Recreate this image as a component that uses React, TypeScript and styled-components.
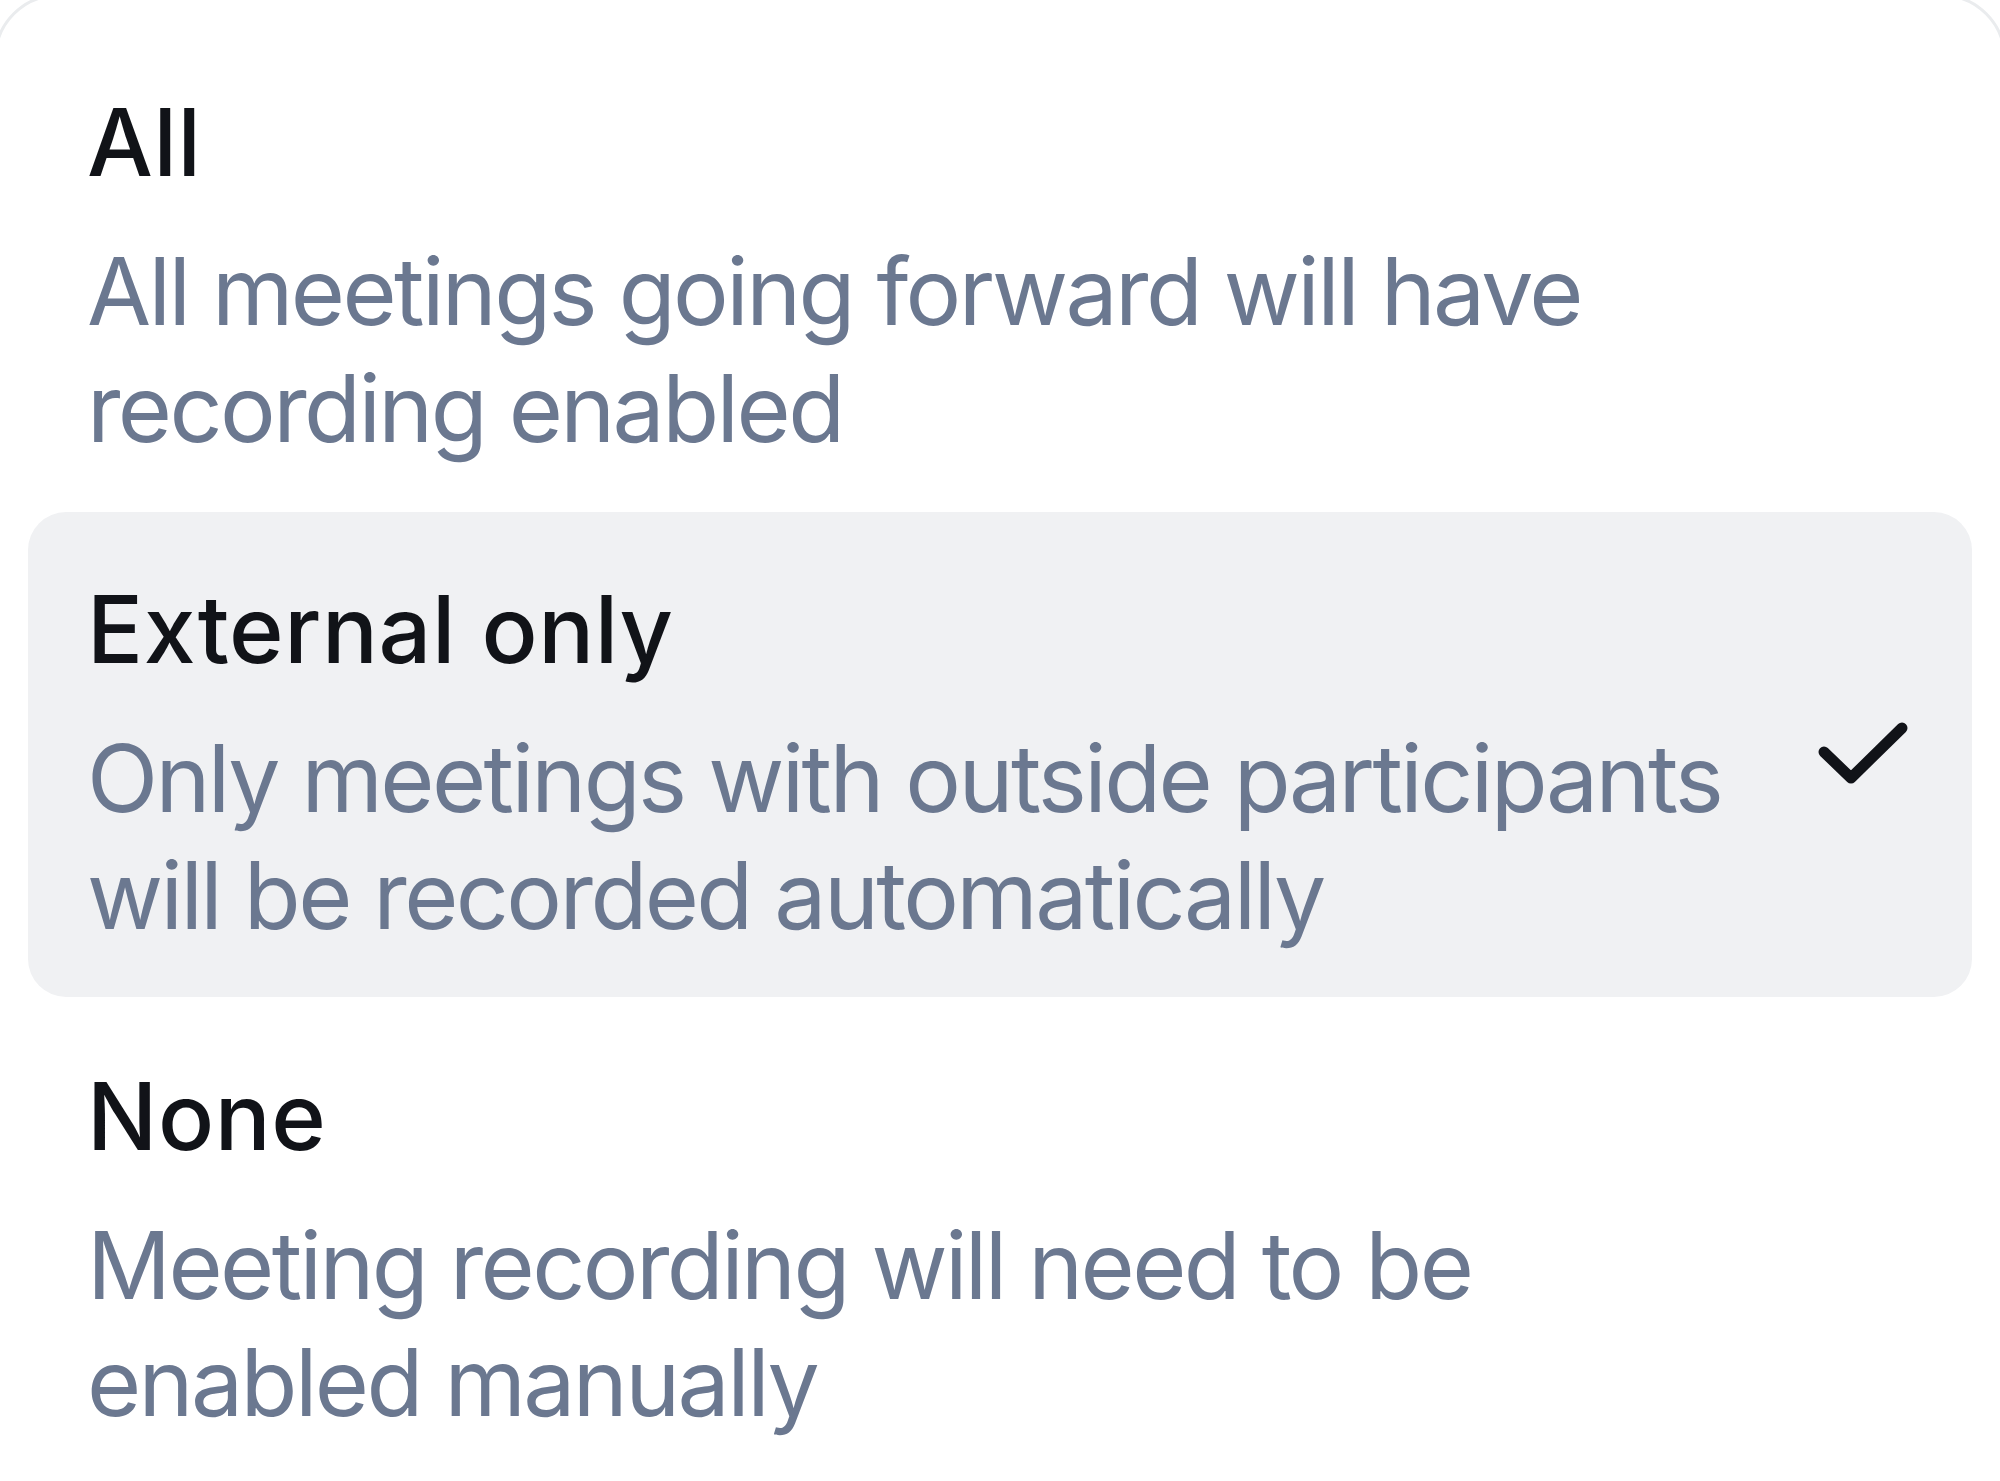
import React from "react";
import styled, { createGlobalStyle } from "styled-components";

const GlobalStyle = createGlobalStyle`
  html, body {
    margin: 0;
    padding: 0;
    background: #ffffff;
    font-family: Inter, "Noto Sans", "Liberation Sans", sans-serif;
    -webkit-font-smoothing: antialiased;
  }
  #root { overflow: hidden; }
`;

const Card = styled.div`
  margin: -6px -6px 0;
  border: 3px solid #eaecee;
  border-radius: 64px;
  background: #ffffff;
  padding: 28px 31px 40px;
  display: flex;
  flex-direction: column;
  gap: 2px;
`;

const Option = styled.div<{ $selected?: boolean }>`
  display: flex;
  align-items: center;
  gap: 24px;
  height: 485px;
  box-sizing: border-box;
  padding: 52px 64px 43px 59px;
  border-radius: 38px;
  background: ${(p) => (p.$selected ? "#f0f1f3" : "transparent")};
`;

const TextCol = styled.div`
  flex: 1;
  min-width: 0;
  display: flex;
  flex-direction: column;
  gap: 26px;
`;

const Title = styled.div`
  font-size: 93px;
  line-height: 130px;
  font-weight: 500;
  color: #111318;
  letter-spacing: 0.6px;
`;

const Desc = styled.div`
  font-size: 93px;
  line-height: 117px;
  font-weight: 400;
  color: #6b7890;
  letter-spacing: -2.6px;
`;

const CheckSlot = styled.div<{ $visible?: boolean }>`
  flex: 0 0 90px;
  height: 62px;
  margin-bottom: 12px;
  display: flex;
  visibility: ${(p) => (p.$visible ? "visible" : "hidden")};
`;

const CheckIcon = () => (
  <svg width="90" height="62" viewBox="0 0 90 62" fill="none">
    <polyline
      points="6,30 33,56 84,6"
      stroke="#111318"
      strokeWidth="11"
      strokeLinecap="round"
      strokeLinejoin="round"
    />
  </svg>
);

const options = [
  {
    title: "All",
    desc: "All meetings going forward will have recording enabled",
    selected: false,
  },
  {
    title: "External only",
    desc: "Only meetings with outside participants will be recorded automatically",
    selected: true,
  },
  {
    title: "None",
    desc: "Meeting recording will need to be enabled manually",
    selected: false,
  },
];

export default function App() {
  return (
    <>
      <GlobalStyle />
      <Card>
        {options.map((o) => (
          <Option key={o.title} $selected={o.selected}>
            <TextCol>
              <Title>{o.title}</Title>
              <Desc>{o.desc}</Desc>
            </TextCol>
            <CheckSlot $visible={o.selected}>
              <CheckIcon />
            </CheckSlot>
          </Option>
        ))}
      </Card>
    </>
  );
}
